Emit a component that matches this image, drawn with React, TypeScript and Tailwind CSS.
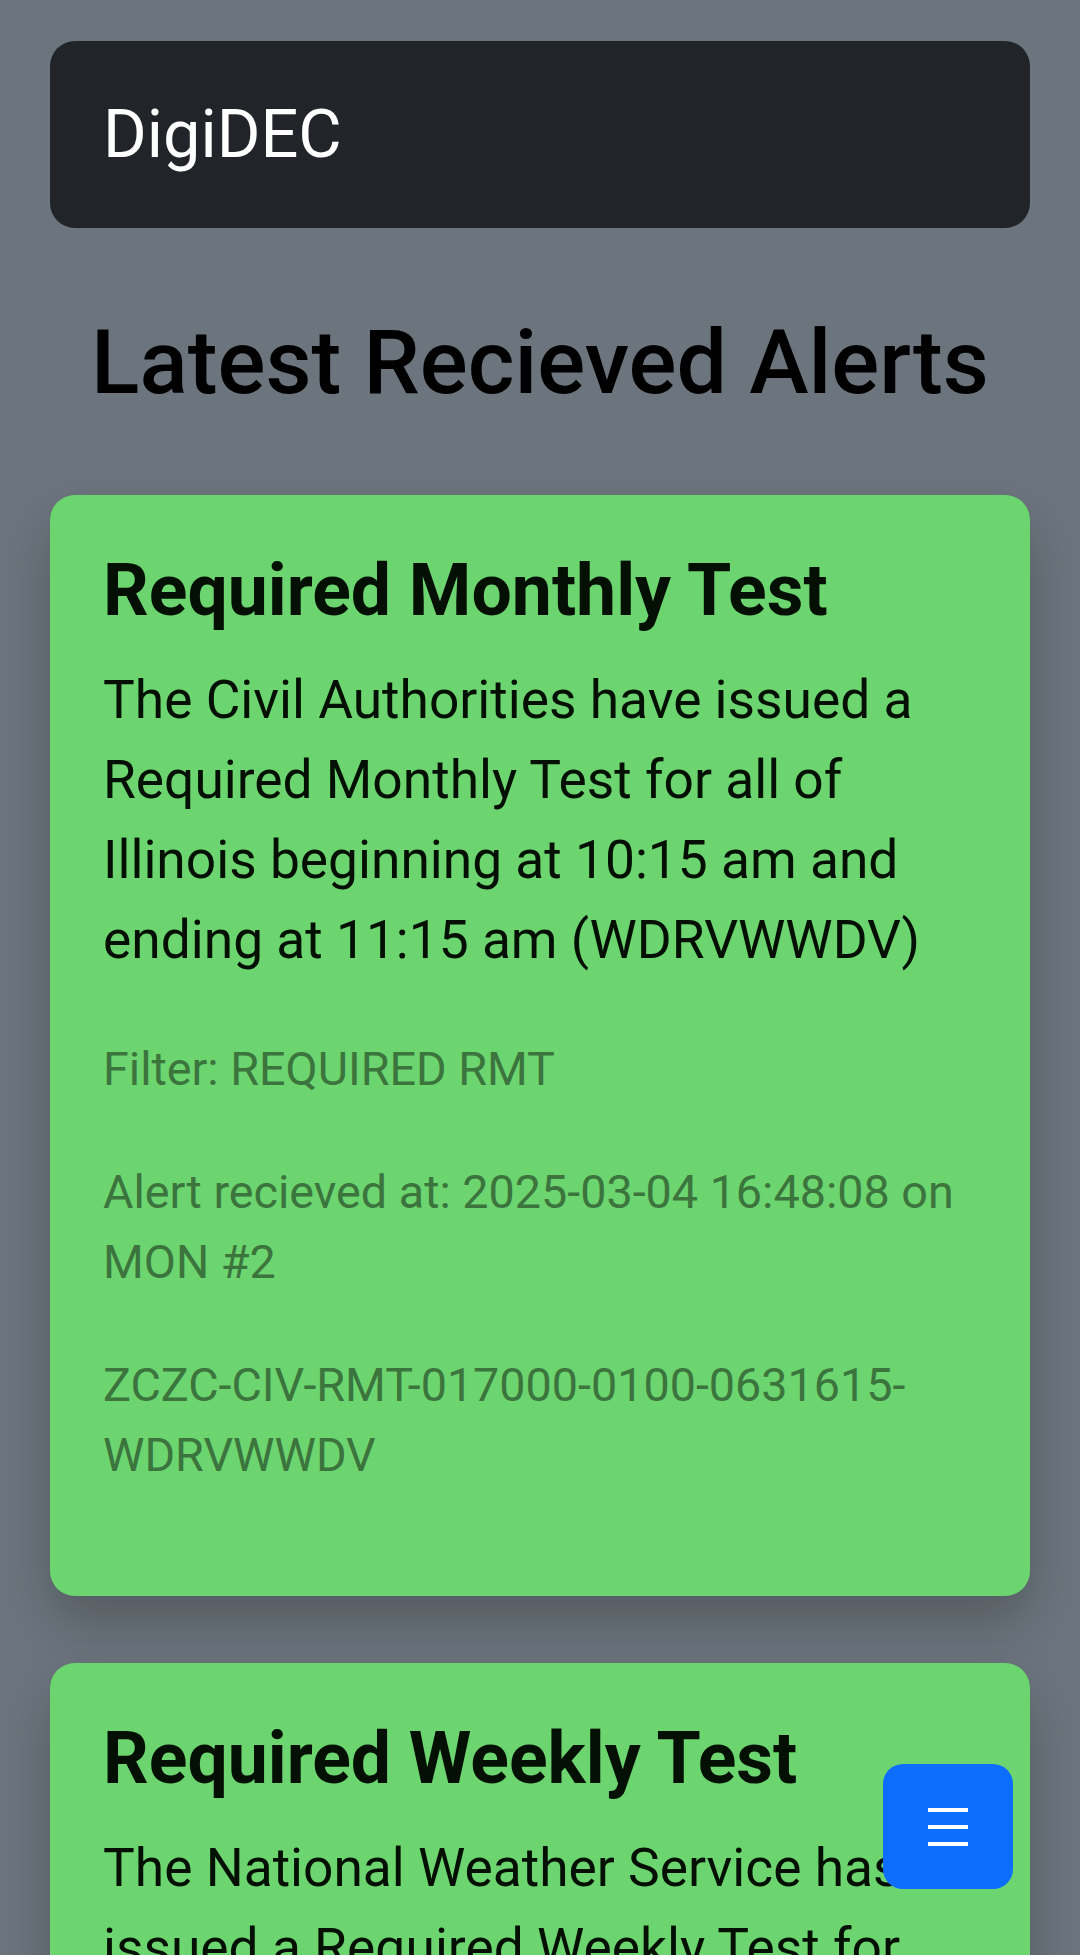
const alerts = [
  {
    title: "Required Monthly Test",
    body: "The Civil Authorities have issued a Required Monthly Test for all of Illinois beginning at 10:15 am and ending at 11:15 am (WDRVWWDV)",
    filter: "REQUIRED RMT",
    received: "2025-03-04 16:48:08",
    monitor: "MON #2",
    header: "ZCZC-CIV-RMT-017000-0100-0631615-WDRVWWDV",
  },
  {
    title: "Required Weekly Test",
    body: "The National Weather Service has issued a Required Weekly Test for Cook County, IL beginning at 11:02 am and ending at 11:17 am (WDRVWWDV)",
    filter: "REQUIRED RWT",
    received: "2025-03-04 11:02:41",
    monitor: "MON #1",
    header: "ZCZC-WXR-RWT-017031-0015-0631102-WDRVWWDV",
  },
]

function AlertCard({ alert }: { alert: (typeof alerts)[number] }) {
  return (
    <div className="mb-[67px] rounded-[25px] bg-[#6cd56f] shadow-[0_27px_53px_rgba(0,0,0,0.22)]">
      <div className="p-[53px]">
        <h4 className="mb-[27px] text-[71.5px] font-bold leading-[1.2] text-[#041004]">{alert.title}</h4>
        <p className="mb-[53px] text-[53.3px] leading-[1.5] text-[#031003]">{alert.body}</p>
        <p className="mb-[53px] text-[46.7px] leading-[1.5] text-[#3b743d]">Filter: {alert.filter}</p>
        <p className="mb-[53px] text-[46.7px] leading-[1.5] text-[#3b743d]">
          Alert recieved at: {alert.received} on {alert.monitor}
        </p>
        <p className="mb-[53px] text-[46.7px] leading-[1.5] text-[#3b743d]">{alert.header}</p>
      </div>
    </div>
  )
}

export default function App() {
  return (
    <div className="min-h-screen bg-[#6c757d] px-[50px] pt-[41px] pb-[40px] font-['Roboto',sans-serif]">
      {/* Navbar */}
      <nav className="flex h-[187px] items-center rounded-[25px] bg-[#212529] px-[53px]">
        <span className="text-[66.7px] leading-[1.5] text-white">DigiDEC</span>
      </nav>

      <h1 className="mt-[81px] mb-[79px] text-center text-[89.5px] font-medium leading-[1.2] text-black">
        Latest Recieved Alerts
      </h1>

      {alerts.map((a) => (
        <AlertCard key={a.header} alert={a} />
      ))}

      {/* floating menu button */}
      <button className="fixed right-[67px] bottom-[66px] flex h-[125px] w-[130px] flex-col items-center justify-center gap-[13px] rounded-[20px] bg-[#0d6efd]">
        <span className="block h-[4px] w-[40px] bg-white" />
        <span className="block h-[4px] w-[40px] bg-white" />
        <span className="block h-[4px] w-[40px] bg-white" />
      </button>
    </div>
  )
}
